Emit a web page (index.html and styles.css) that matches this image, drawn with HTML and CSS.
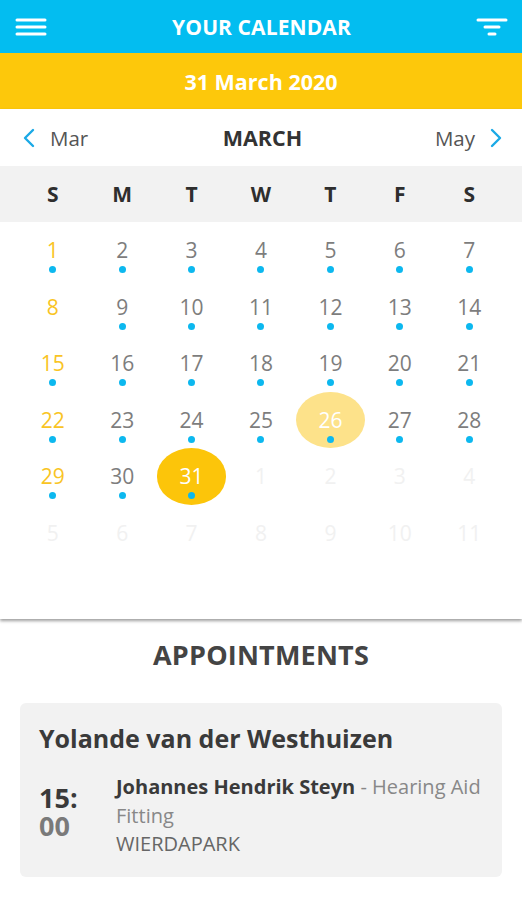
FILE: index.html
```html
<!DOCTYPE html>
<html>
<head>
<meta charset="utf-8">
<link rel="stylesheet" href="styles.css">
</head>
<body>
<header class="topbar">
  <svg class="icon" width="32" height="20" viewBox="0 0 32 20"><g stroke="#fff" stroke-width="3" stroke-linecap="round"><line x1="2" y1="3" x2="30" y2="3"/><line x1="2" y1="10" x2="30" y2="10"/><line x1="2" y1="17" x2="30" y2="17"/></g></svg>
  <h1 class="title">YOUR CALENDAR</h1>
  <svg class="icon" width="32" height="20" viewBox="0 0 32 20"><g stroke="#fff" stroke-width="3" stroke-linecap="round"><line x1="2" y1="3" x2="30" y2="3"/><line x1="9" y1="10" x2="23" y2="10"/><line x1="13" y1="17" x2="19" y2="17"/></g></svg>
</header>
<div class="datebar">31 March 2020</div>
<section class="calendar">
  <div class="monthnav">
    <div class="navlink"><svg width="12" height="20" viewBox="0 0 12 20"><polyline points="10,2 2,10 10,18" fill="none" stroke="#1aa9e6" stroke-width="2.4" stroke-linecap="round" stroke-linejoin="round"/></svg><span>Mar</span></div>
    <div class="month">MARCH</div>
    <div class="navlink"><span>May</span><svg width="12" height="20" viewBox="0 0 12 20"><polyline points="2,2 10,10 2,18" fill="none" stroke="#1aa9e6" stroke-width="2.4" stroke-linecap="round" stroke-linejoin="round"/></svg></div>
  </div>
  <div class="weekdays">
    <span>S</span><span>M</span><span>T</span><span>W</span><span>T</span><span>F</span><span>S</span>
  </div>
  <div class="grid">
    <div class="cell sun"><span class="num">1</span><span class="dot"></span></div>
    <div class="cell"><span class="num">2</span><span class="dot"></span></div>
    <div class="cell"><span class="num">3</span><span class="dot"></span></div>
    <div class="cell"><span class="num">4</span><span class="dot"></span></div>
    <div class="cell"><span class="num">5</span><span class="dot"></span></div>
    <div class="cell"><span class="num">6</span><span class="dot"></span></div>
    <div class="cell"><span class="num">7</span><span class="dot"></span></div>

    <div class="cell sun"><span class="num">8</span><span class="nodot"></span></div>
    <div class="cell"><span class="num">9</span><span class="dot"></span></div>
    <div class="cell"><span class="num">10</span><span class="dot"></span></div>
    <div class="cell"><span class="num">11</span><span class="dot"></span></div>
    <div class="cell"><span class="num">12</span><span class="dot"></span></div>
    <div class="cell"><span class="num">13</span><span class="dot"></span></div>
    <div class="cell"><span class="num">14</span><span class="dot"></span></div>

    <div class="cell sun"><span class="num">15</span><span class="dot"></span></div>
    <div class="cell"><span class="num">16</span><span class="dot"></span></div>
    <div class="cell"><span class="num">17</span><span class="dot"></span></div>
    <div class="cell"><span class="num">18</span><span class="dot"></span></div>
    <div class="cell"><span class="num">19</span><span class="dot"></span></div>
    <div class="cell"><span class="num">20</span><span class="dot"></span></div>
    <div class="cell"><span class="num">21</span><span class="dot"></span></div>

    <div class="cell sun"><span class="num">22</span><span class="dot"></span></div>
    <div class="cell"><span class="num">23</span><span class="dot"></span></div>
    <div class="cell"><span class="num">24</span><span class="dot"></span></div>
    <div class="cell"><span class="num">25</span><span class="dot"></span></div>
    <div class="cell today"><span class="num">26</span><span class="dot"></span></div>
    <div class="cell"><span class="num">27</span><span class="dot"></span></div>
    <div class="cell"><span class="num">28</span><span class="dot"></span></div>

    <div class="cell sun"><span class="num">29</span><span class="dot"></span></div>
    <div class="cell"><span class="num">30</span><span class="dot"></span></div>
    <div class="cell selected"><span class="num">31</span><span class="dot"></span></div>
    <div class="cell other"><span class="num">1</span></div>
    <div class="cell other"><span class="num">2</span></div>
    <div class="cell other"><span class="num">3</span></div>
    <div class="cell other"><span class="num">4</span></div>

    <div class="cell other"><span class="num">5</span></div>
    <div class="cell other"><span class="num">6</span></div>
    <div class="cell other"><span class="num">7</span></div>
    <div class="cell other"><span class="num">8</span></div>
    <div class="cell other"><span class="num">9</span></div>
    <div class="cell other"><span class="num">10</span></div>
    <div class="cell other"><span class="num">11</span></div>
  </div>
</section>
<section class="appointments">
  <h2 class="heading">APPOINTMENTS</h2>
  <div class="card">
    <div class="card-title">Yolande van der Westhuizen</div>
    <div class="appt">
      <div class="time"><span class="hh">15:</span><span class="mm">00</span></div>
      <div class="details">
        <p class="desc"><span class="patient">Johannes Hendrik Steyn</span> <span class="type">- Hearing Aid Fitting</span></p>
        <p class="place">WIERDAPARK</p>
      </div>
    </div>
  </div>
</section>
</body>
</html>
```
FILE: styles.css
```css
* { box-sizing: border-box; }
html, body { margin: 0; padding: 0; background: #fff; }
body { font-family: "Open Sans", "DejaVu Sans", sans-serif; width: 522px; }

.topbar {
  height: 53px;
  background: #03bdf0;
  display: flex;
  align-items: center;
  justify-content: space-between;
  padding: 0 14px 0 15px;
}
.icon { display: block; }
.title {
  margin: 0;
  color: #fff;
  font-size: 21px;
  font-weight: 700;
  letter-spacing: 0.1px;
}

.datebar {
  height: 56px;
  background: #fdc80b;
  color: #fff;
  font-weight: 700;
  font-size: 21.5px;
  display: flex;
  align-items: center;
  justify-content: center;
}

.calendar {
  height: 510px;
  background: #fff;
  box-shadow: 0 2px 3px rgba(0,0,0,0.38);
  position: relative;
  z-index: 1;
}

.monthnav {
  height: 57px;
  display: flex;
  align-items: center;
  justify-content: space-between;
  padding: 0 20px 0 23px;
}
.navlink {
  display: flex;
  align-items: center;
  gap: 15px;
  color: #555;
  font-size: 20.5px;
  width: 100px;
}
.navlink:last-child { justify-content: flex-end; }
.navlink svg { display: block; }
.month {
  font-weight: 700;
  font-size: 21.5px;
  color: #333;
}

.weekdays {
  height: 56px;
  background: #f2f2f2;
  display: grid;
  grid-template-columns: repeat(7, 1fr);
  padding: 0 18px;
  align-items: center;
  font-weight: 700;
  font-size: 21px;
  color: #2e2e2e;
}
.weekdays span { text-align: center; }

.grid {
  display: grid;
  grid-template-columns: repeat(7, 1fr);
  grid-auto-rows: 56.6px;
  padding: 0 18px;
}
.cell {
  display: flex;
  flex-direction: column;
  align-items: center;
  padding-top: 16px;
  border-radius: 50%;
}
.num {
  font-size: 21px;
  line-height: 24px;
  color: #7d7d7d;
}
.dot {
  width: 7px;
  height: 7px;
  border-radius: 50%;
  background: #0cb8ef;
  margin-top: 4px;
}
.nodot { height: 7px; margin-top: 4px; }
.sun .num { color: #f9c424; }
.today { background: #fde28a; }
.today .num { color: #fff; }
.selected { background: #fcc50a; }
.selected .num { color: #fff; }
.other .num { color: #f1f1f1; }

.appointments {
  padding: 17px 20px 24px;
}
.heading {
  margin: 0 0 29px;
  text-align: center;
  font-size: 27px;
  font-weight: 700;
  color: #444;
  line-height: 38px;
  letter-spacing: 0.2px;
}
.card {
  background: #f2f2f2;
  border-radius: 6px;
  padding: 19px 14px 18px 19px;
}
.card-title {
  font-size: 25px;
  font-weight: 700;
  color: #3a3a3a;
  line-height: 32px;
  margin-bottom: 19px;
}
.appt {
  display: flex;
}
.time {
  width: 77px;
  display: flex;
  flex-direction: column;
  padding-top: 11px;
  font-weight: 700;
  font-size: 27px;
  line-height: 28px;
}
.hh { color: #3a3a3a; }
.mm { color: #7a7a7a; }
.details {
  flex: 1;
  font-size: 20px;
  line-height: 28.5px;
  color: #888;
}
.desc, .place { margin: 0; }
.patient { color: #3a3a3a; font-weight: 700; }
.type { color: #888; }
.place { color: #666; }
```
